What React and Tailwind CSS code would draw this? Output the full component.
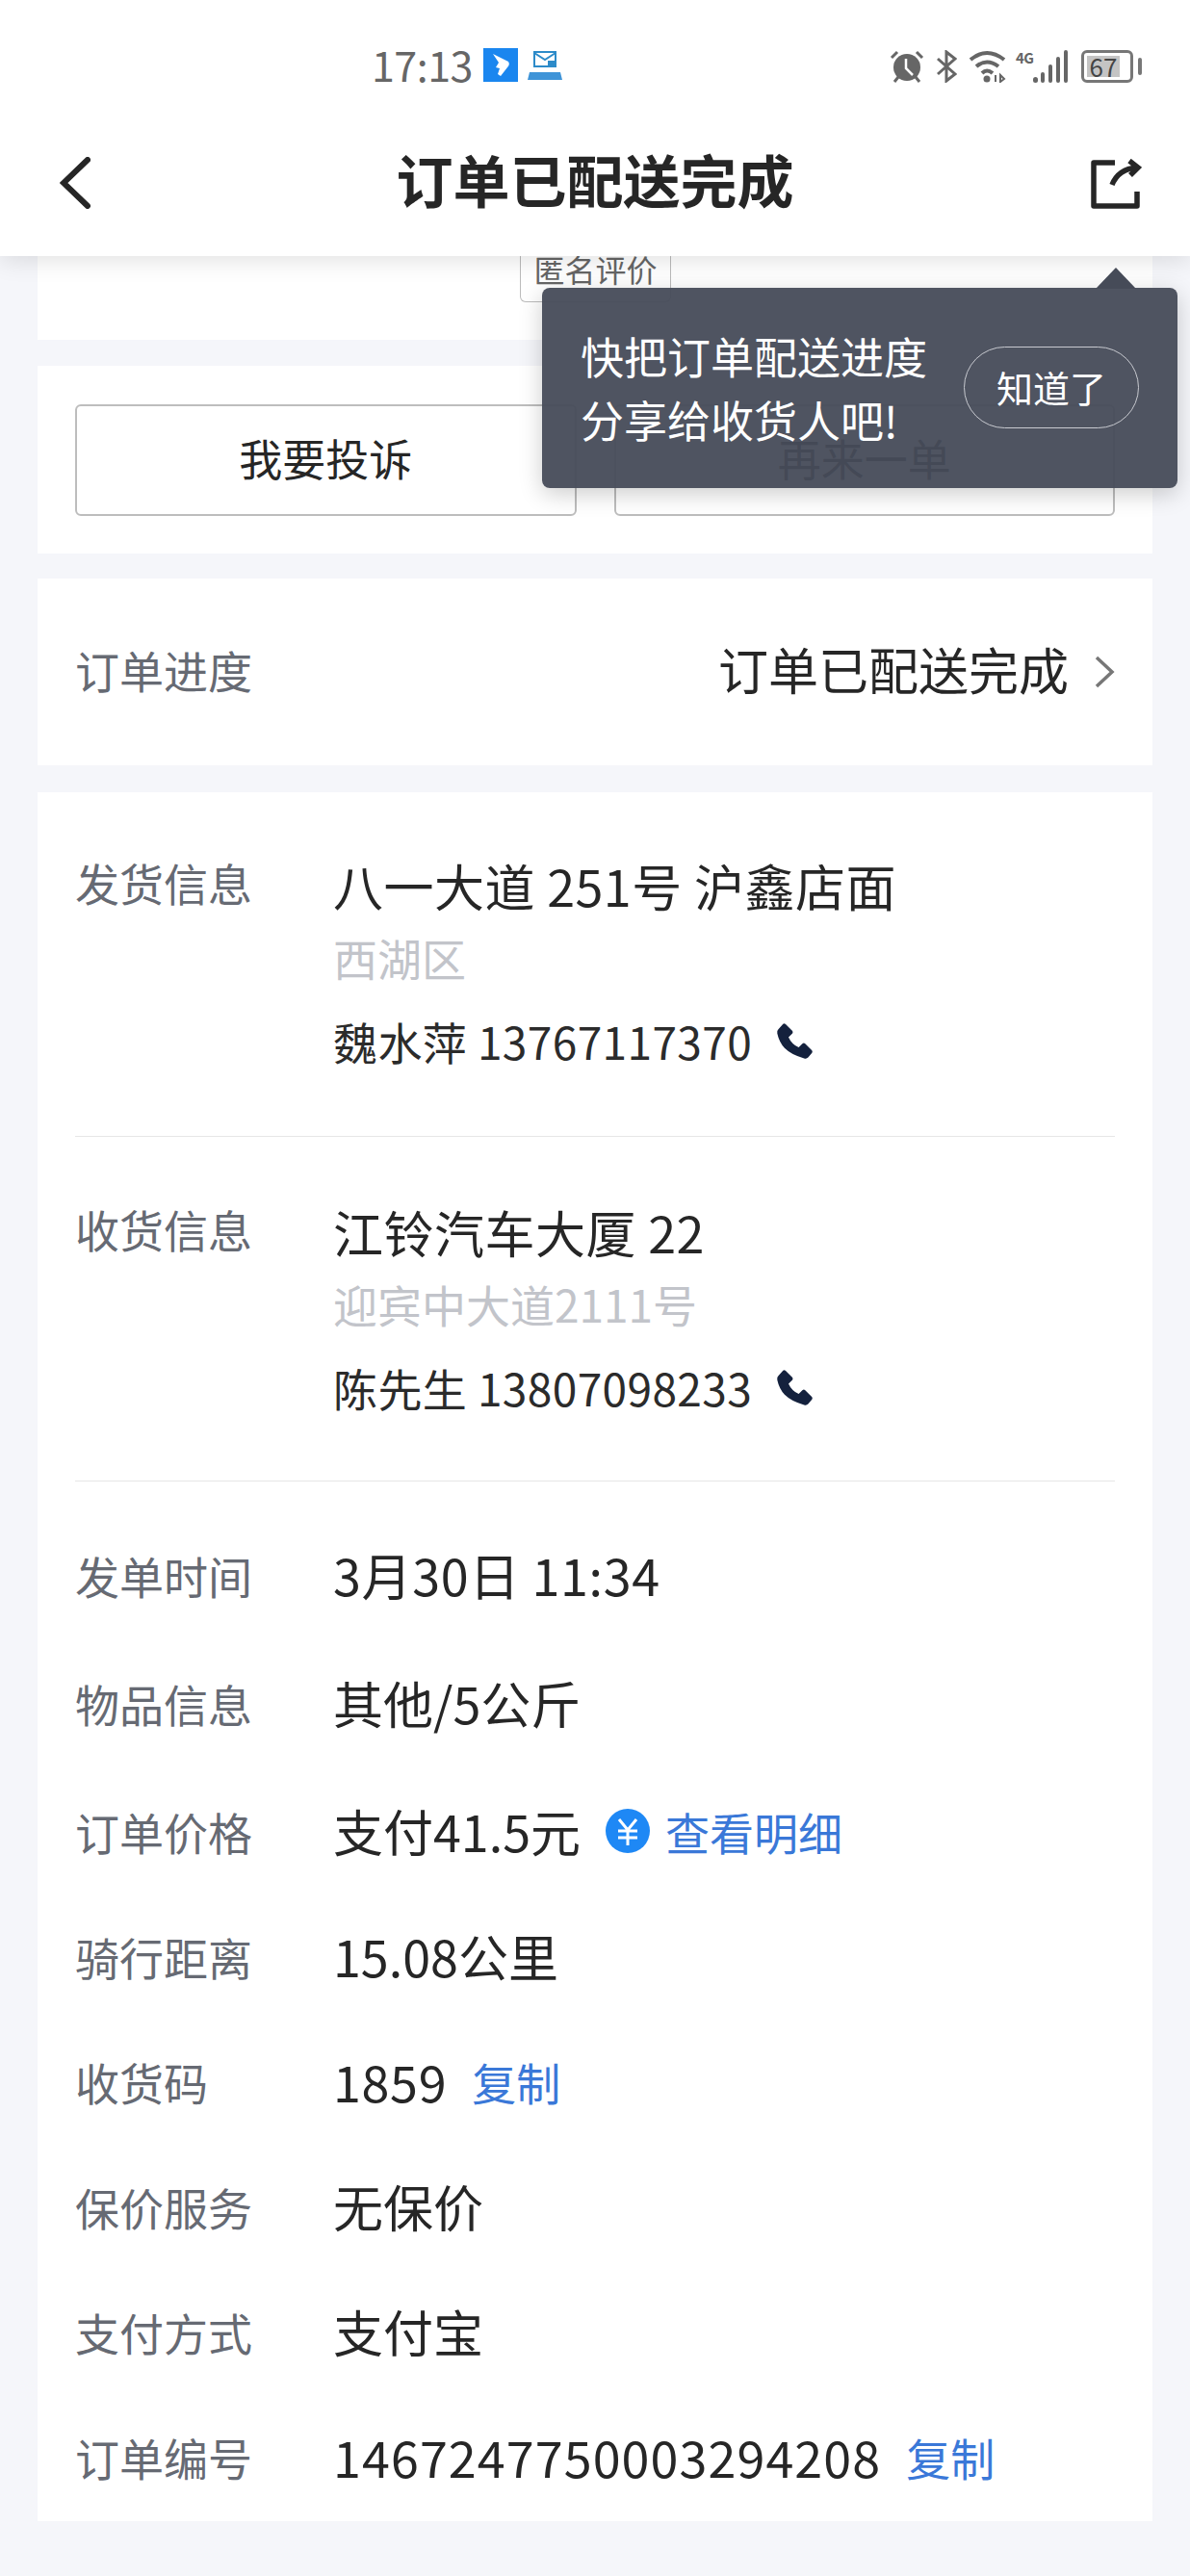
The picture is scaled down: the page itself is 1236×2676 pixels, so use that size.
import React from 'react';

const PhoneIcon = () => (
  <svg viewBox="0 0 24 24" className="ml-[25px] h-[39px] w-[39px]" fill="#14213d">
    <path d="M6 1 L10.5 5.5 Q11 6.2 10.5 7 L8 9.5 Q10 14 14.5 16 L17 13.5 Q17.8 13 18.5 13.5 L23 18 Q23.5 18.8 23 19.5 L20.5 22.5 Q19.5 23.5 18 23 Q10 21 5.5 16.5 Q2 12.5 .8 7 Q.5 5.5 1.5 4.5 L4.5 1 Q5.2 .5 6 1Z" />
  </svg>
);

const YenIcon = () => (
  <svg viewBox="0 0 46 46" className="ml-[26px] mr-[16px] h-[46px] w-[46px]">
    <circle cx="23" cy="23" r="23" fill="#1e88f5" />
    <path d="M14 11 L23 22 L32 11 M13 23 H33 M13 30 H33 M23 22 V38" stroke="#fff" strokeWidth="3" fill="none" />
  </svg>
);

const StatusBar = () => (
  <div className="flex h-[102px] items-end pb-[16px] text-[#666]">
    <div className="ml-[386px] flex items-center">
      <span className="pb-[2px] text-[43px] leading-[36px] tracking-[-0.5px]">17:13</span>
      <svg viewBox="0 0 36 35" className="ml-[11px] h-[35px] w-[36px]">
        <rect width="36" height="35" fill="#1a86ef" />
        <path d="M10 6 L26 14 Q28 17 25 20 L18 29 L15 27 L17 21 L13 20 L16 15 Z" fill="#fff" />
      </svg>
      <svg viewBox="0 0 36 32" className="ml-[10px] h-[32px] w-[36px]">
        <path d="M7 3 H29 V18 H7 Z" fill="none" stroke="#2d8bc9" strokeWidth="2" />
        <path d="M7 4 L18 11 L29 4" fill="none" stroke="#2d8bc9" strokeWidth="2" />
        <rect x="21" y="12" width="9" height="6" fill="#2d8bc9" />
        <path d="M2 24 H34 L36 32 H0 Z" fill="#3f94d8" />
      </svg>
    </div>
    <div className="ml-auto mr-[50px] flex items-center">
      <svg viewBox="0 0 36 34" className="h-[34px] w-[36px]" fill="#666">
        <circle cx="18" cy="18" r="14" />
        <path d="M2 8 L8 2 M34 8 L28 2 M5 33 L9 28 M31 33 L27 28" stroke="#666" strokeWidth="3" />
        <path d="M17 9 V19 L24 26" stroke="#fff" strokeWidth="2.5" fill="none" />
      </svg>
      <svg viewBox="0 0 22 34" className="ml-[12px] h-[34px] w-[22px]" fill="none" stroke="#666" strokeWidth="3">
        <path d="M2 9 L20 25 L11 32 V2 L20 9 L2 25" />
      </svg>
      <svg viewBox="0 0 40 34" className="ml-[12px] h-[34px] w-[40px]" fill="none" stroke="#666" strokeWidth="4">
        <path d="M2 10 Q19 -4 37 10 M8 17 Q19 8 31 17 M14 24 Q19 19 25 24" />
        <circle cx="19" cy="30" r="3.5" fill="#666" stroke="none" />
        <path d="M28 26 V33 M33 33 L33 26 L37 30 Z" strokeWidth="2" />
      </svg>
      <span className="ml-[9px] h-[34px] w-[18px] text-[15px] font-bold leading-[15px] tracking-[-0.5px] text-[#666]">4G</span>
      <svg viewBox="0 0 36 34" className="h-[34px] w-[36px]" fill="#666">
        <rect x="0" y="28" width="5" height="6" rx="2.5" />
        <rect x="8" y="23" width="4" height="11" rx="2" />
        <rect x="16" y="15" width="4" height="19" rx="2" />
        <rect x="24" y="7" width="4" height="27" rx="2" />
        <rect x="32" y="0" width="4" height="34" rx="2" />
      </svg>
      <div className="ml-[14px] flex h-[34px] w-[54px] items-center rounded-[6px] border-[3px] border-[#777] p-[3px]">
        <span className="flex h-[22px] w-[34px] items-center justify-center bg-[#c4c4c4] text-[26px] leading-[22px] text-[#444]">67</span>
      </div>
      <div className="ml-[5px] h-[18px] w-[4px] rounded-full bg-[#777]" />
    </div>
  </div>
);

const Section = ({ label, address, sub, name, phone, className }) => (
  <div className={`flex ${className}`}>
    <div className="-mt-[7px] w-[268px] text-[46px] leading-[70px] text-[#666a73]">{label}</div>
    <div>
      <div className="-mt-[3px] mb-[3px] text-[52px] leading-[70px] tracking-[0.5px] text-[#262626]">{address}</div>
      <div className="-mt-[3px] mb-[3px] text-[46px] leading-[78px] text-[#c2c4ca]">{sub}</div>
      <div className="-mt-[3px] mb-[3px] flex h-[96px] items-center text-[46px] tracking-[0.4px] text-[#2b2b2b]">
        {name} {phone}
        <PhoneIcon />
      </div>
    </div>
  </div>
);

const Row = ({ label, className, children }) => (
  <div className={`flex h-[130px] items-center ${className}`}>
    <div className="w-[268px] text-[46px] text-[#666a73]">{label}</div>
    <div className="flex items-center text-[52px] text-[#262626]">{children}</div>
  </div>
);

const Link = ({ children, className }) => (
  <span className={`text-[46px] text-[#3a78d8] ${className}`}>{children}</span>
);

export default function App() {
  return (
    <div className="relative min-h-[2676px] bg-[#f5f6fa] font-['Noto_Sans_CJK_SC',sans-serif]">
      {/* 顶部导航 */}
      <header className="relative z-10 h-[266px] bg-white shadow-[0_4px_24px_rgba(0,0,0,0.12)]">
        <StatusBar />
        <div className="relative flex h-[164px] items-center justify-center">
          <svg viewBox="0 0 32 54" className="absolute left-[62px] top-[61px] h-[54px] w-[32px]" fill="none" stroke="#262626" strokeWidth="6" strokeLinecap="round">
            <path d="M29 3 L4 27 L29 51" />
          </svg>
          <h1 className="pt-[2px] text-[59px] font-bold leading-none text-[#262626]">订单已配送完成</h1>
          <svg viewBox="0 0 54 54" className="absolute left-[1132px] top-[63px] h-[54px] w-[54px]" fill="none" stroke="#262626" strokeWidth="5.5">
            <path d="M26 4 H4 V49 H49 V34" strokeLinejoin="round" />
            <path d="M23 27 C27 17 36 10 49 9" />
            <path d="M41 2 L50 9 L42 17" />
          </svg>
        </div>
      </header>

      <main className="px-[39px]">
        <div className="h-[87px] overflow-hidden bg-white pl-[501px]">
          <div className="flex h-[48px] w-[157px] items-end justify-center rounded-b-[6px] border border-t-0 border-[#bbb] pb-[18px] text-[32px] leading-none text-[#666]">
            匿名评价
          </div>
        </div>

        <div className="mt-[27px] flex h-[195px] gap-[39px] bg-white px-[39px] pt-[40px]">
          {['我要投诉', '再来一单'].map((text) => (
            <button key={text} className="flex h-[116px] flex-1 items-center justify-center rounded-[6px] border-2 border-[#bdbdbd] pb-[4px] text-[45px] text-[#262626]">
              {text}
            </button>
          ))}
        </div>

        <div className="mt-[26px] flex h-[194px] items-center bg-white px-[39px]">
          <span className="pb-[6px] text-[46px] text-[#666a73]">订单进度</span>
          <span className="ml-auto pb-[6px] text-[52px] text-[#262626]">订单已配送完成</span>
          <svg viewBox="0 0 22 36" className="ml-[26px] h-[36px] w-[22px]" fill="none" stroke="#777" strokeWidth="3.5">
            <path d="M3 3 L19 18 L3 33" />
          </svg>
        </div>

        <div className="mt-[28px] bg-white px-[39px]">
          <Section label="发货信息" address="八一大道 251号 沪鑫店面" sub="西湖区" name="魏水萍" phone="13767117370" className="pb-[48px] pt-[65px]" />
          <div className="h-px bg-[#e6e6e6]" />
          <Section label="收货信息" address="江铃汽车大厦 22" sub="迎宾中大道2111号" name="陈先生" phone="13807098233" className="pb-[46px] pt-[67px]" />
          <div className="h-px bg-[#e6e6e6]" />
          <div className="pb-[2px] pt-[32px]">
            <Row label="发单时间" className="mb-[3px]"><span className="tracking-[0.7px]">3月30日 11:34</span></Row>
            <Row label="物品信息" className="mb-[3px]">其他/5公斤</Row>
            <Row label="订单价格">
              支付41.5元
              <YenIcon />
              <Link>查看明细</Link>
            </Row>
            <Row label="骑行距离">15.08公里</Row>
            <Row label="收货码">
              <span className="tracking-[0.7px]">1859</span>
              <Link className="ml-[26px]">复制</Link>
            </Row>
            <Row label="保价服务">无保价</Row>
            <Row label="支付方式">支付宝</Row>
            <Row label="订单编号">
              <span className="tracking-[1.1px]">1467247750003294208</span>
              <Link className="ml-[26px]">复制</Link>
            </Row>
          </div>
        </div>
      </main>

      {/* 分享提示 */}
      <div className="absolute left-[563px] top-[299px] z-20 h-[208px] w-[660px] rounded-[8px] bg-[#464b58]/95 shadow-[0_6px_24px_rgba(0,0,0,0.2)]">
        <div className="absolute left-[575px] top-[-21px] h-0 w-0 border-x-[21px] border-b-[22px] border-x-transparent border-b-[#464b58]" />
        <div className="flex h-full items-start pl-[40px] pt-[38px]">
          <p className="w-[398px] text-[45px] leading-[66px] text-white">快把订单配送进度<br />分享给收货人吧!</p>
          <button className="mt-[23px] h-[85px] w-[182px] rounded-full border border-[#c8cad0] pb-[2px] text-[38px] text-white">知道了</button>
        </div>
      </div>
    </div>
  );
}
